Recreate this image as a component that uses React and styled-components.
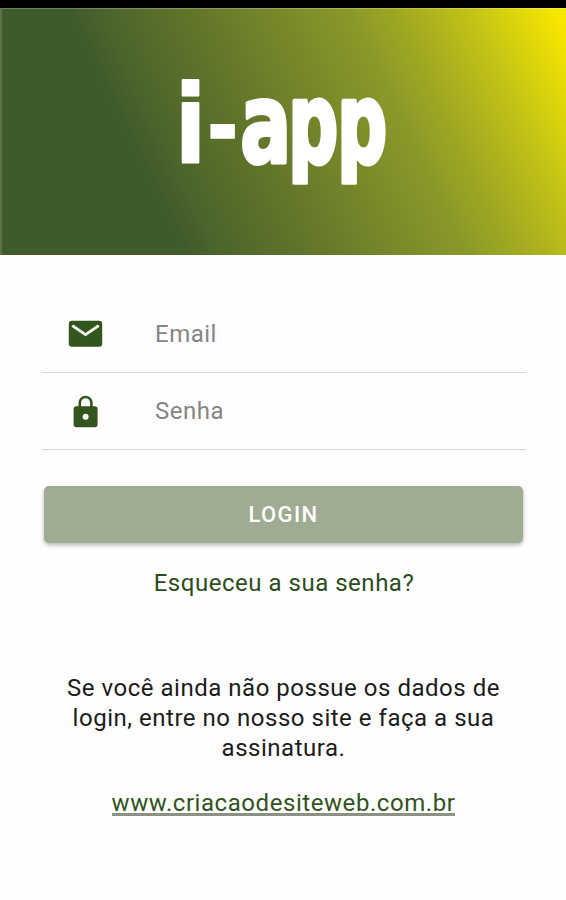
import styled, { createGlobalStyle } from "styled-components";

const GlobalStyle = createGlobalStyle`
  * {
    box-sizing: border-box;
  }
  body {
    margin: 0;
    background: #fefefe;
    font-family: Roboto, "Liberation Sans", sans-serif;
  }
`;

const Page = styled.div`
  display: flex;
  flex-direction: column;
  height: 900px;
  overflow: hidden;
`;

const StatusBar = styled.div`
  flex: none;
  height: 8px;
  background: #000;
`;

const Banner = styled.header`
  flex: none;
  height: 247px;
  border-top: 1px solid rgba(255, 255, 255, 0.25);
  border-left: 2px solid rgba(255, 255, 255, 0.15);
  background: linear-gradient(
    64deg,
    #3f5a2b 27%,
    #4a642b 32%,
    #5e722a 43%,
    #8a9829 68%,
    #a5ac20 77%,
    #c3c416 86%,
    #f7e600 98%
  ) border-box;
`;

const Logo = styled.svg`
  display: block;
  width: 100%;
  height: 100%;
  font-family: "DejaVu Sans", sans-serif;
  font-weight: 700;
  font-size: 108px;
  fill: #fff;
  stroke: #fff;
  stroke-linejoin: round;
`;

const Form = styled.form`
  display: flex;
  flex-direction: column;
  padding: 41px 40px 0 42px;
`;

const Field = styled.label`
  display: flex;
  align-items: center;
  height: 77px;
  padding-left: 23px;
  border-bottom: 1px solid #d6d6d6;
`;

const FieldIcon = styled.svg`
  flex: none;
  width: 40px;
  height: 40px;
  margin-right: 50px;
  fill: #33551e;
`;

const Input = styled.input`
  flex: 1;
  min-width: 0;
  padding: 0;
  border: 0;
  outline: 0;
  background: none;
  font-family: inherit;
  font-size: 24px;
  letter-spacing: 0.5px;
  &::placeholder {
    color: #858585;
    opacity: 1;
  }
`;

const LoginButton = styled.button`
  height: 57px;
  margin: 36px 3px 0 2px;
  border: 0;
  border-radius: 5px;
  background: #9fab93;
  box-shadow: 0 2px 4px rgba(0, 0, 0, 0.3);
  color: #fff;
  font-family: inherit;
  font-size: 22px;
  font-weight: 500;
  letter-spacing: 1.4px;
`;

const Forgot = styled.a`
  margin-top: 25px;
  color: #2c4c1d;
  font-size: 24px;
  line-height: 30px;
  letter-spacing: 0.52px;
  text-align: center;
`;

const Footer = styled.footer`
  padding: 75px 60px 0 61px;
  color: #1c1c1c;
  font-size: 24px;
  line-height: 30px;
  letter-spacing: 0.52px;
  text-align: center;
`;

const Line = styled.span`
  display: block;
  white-space: nowrap;
`;

const SiteLink = styled.a`
  display: inline-block;
  height: 28px;
  margin-top: 25px;
  border-bottom: 3px solid #8b9183;
  color: #315320;
  letter-spacing: 0.56px;
`;

const MailIcon = () => (
  <FieldIcon viewBox="0 0 40 40">
    <rect x="3.8" y="6.8" width="33.4" height="26" rx="3" />
    <path d="M7.3 11.6 20.5 20.6 33.7 11.6" fill="none" stroke="#fff" strokeWidth="2.9" />
  </FieldIcon>
);

const LockIcon = () => (
  <FieldIcon viewBox="0 0 40 40">
    <rect x="8.6" y="15.3" width="24" height="21" rx="2.8" />
    <path d="M14.8 16V11.8a5.8 5.8 0 0 1 11.6 0V16" fill="none" stroke="#33551e" strokeWidth="2.6" />
    <circle cx="20.6" cy="25.8" r="3" fill="#fff" />
  </FieldIcon>
);

function App() {
  return (
    <>
      <GlobalStyle />
      <Page>
        <StatusBar />
        <Banner>
          <Logo viewBox="0 0 564 246">
            <clipPath id="descender">
              <rect x="0" y="0" width="564" height="175.5" />
            </clipPath>
            <g clipPath="url(#descender)">
              <text transform="translate(172.9 154) scale(0.84 1)" strokeWidth="2">i</text>
              <text transform="translate(205 149.3) scale(0.82 1)" fontSize="92" strokeWidth="1.5">-</text>
              <text transform="translate(238.2 153.4) scale(0.7 1.02)" strokeWidth="4">a</text>
              <text transform="translate(286.2 153.4) scale(0.645 1.02)" strokeWidth="5">p</text>
              <text transform="translate(335.2 153.4) scale(0.645 1.02)" strokeWidth="5">p</text>
            </g>
          </Logo>
        </Banner>
        <Form>
          <Field>
            <MailIcon />
            <Input type="email" placeholder="Email" />
          </Field>
          <Field>
            <LockIcon />
            <Input type="password" placeholder="Senha" />
          </Field>
          <LoginButton type="button">LOGIN</LoginButton>
          <Forgot>Esqueceu a sua senha?</Forgot>
        </Form>
        <Footer>
          <Line>Se você ainda não possue os dados de</Line>
          <Line>login, entre no nosso site e faça a sua</Line>
          <Line>assinatura.</Line>
          <SiteLink>www.criacaodesiteweb.com.br</SiteLink>
        </Footer>
      </Page>
    </>
  );
}

export default App;
